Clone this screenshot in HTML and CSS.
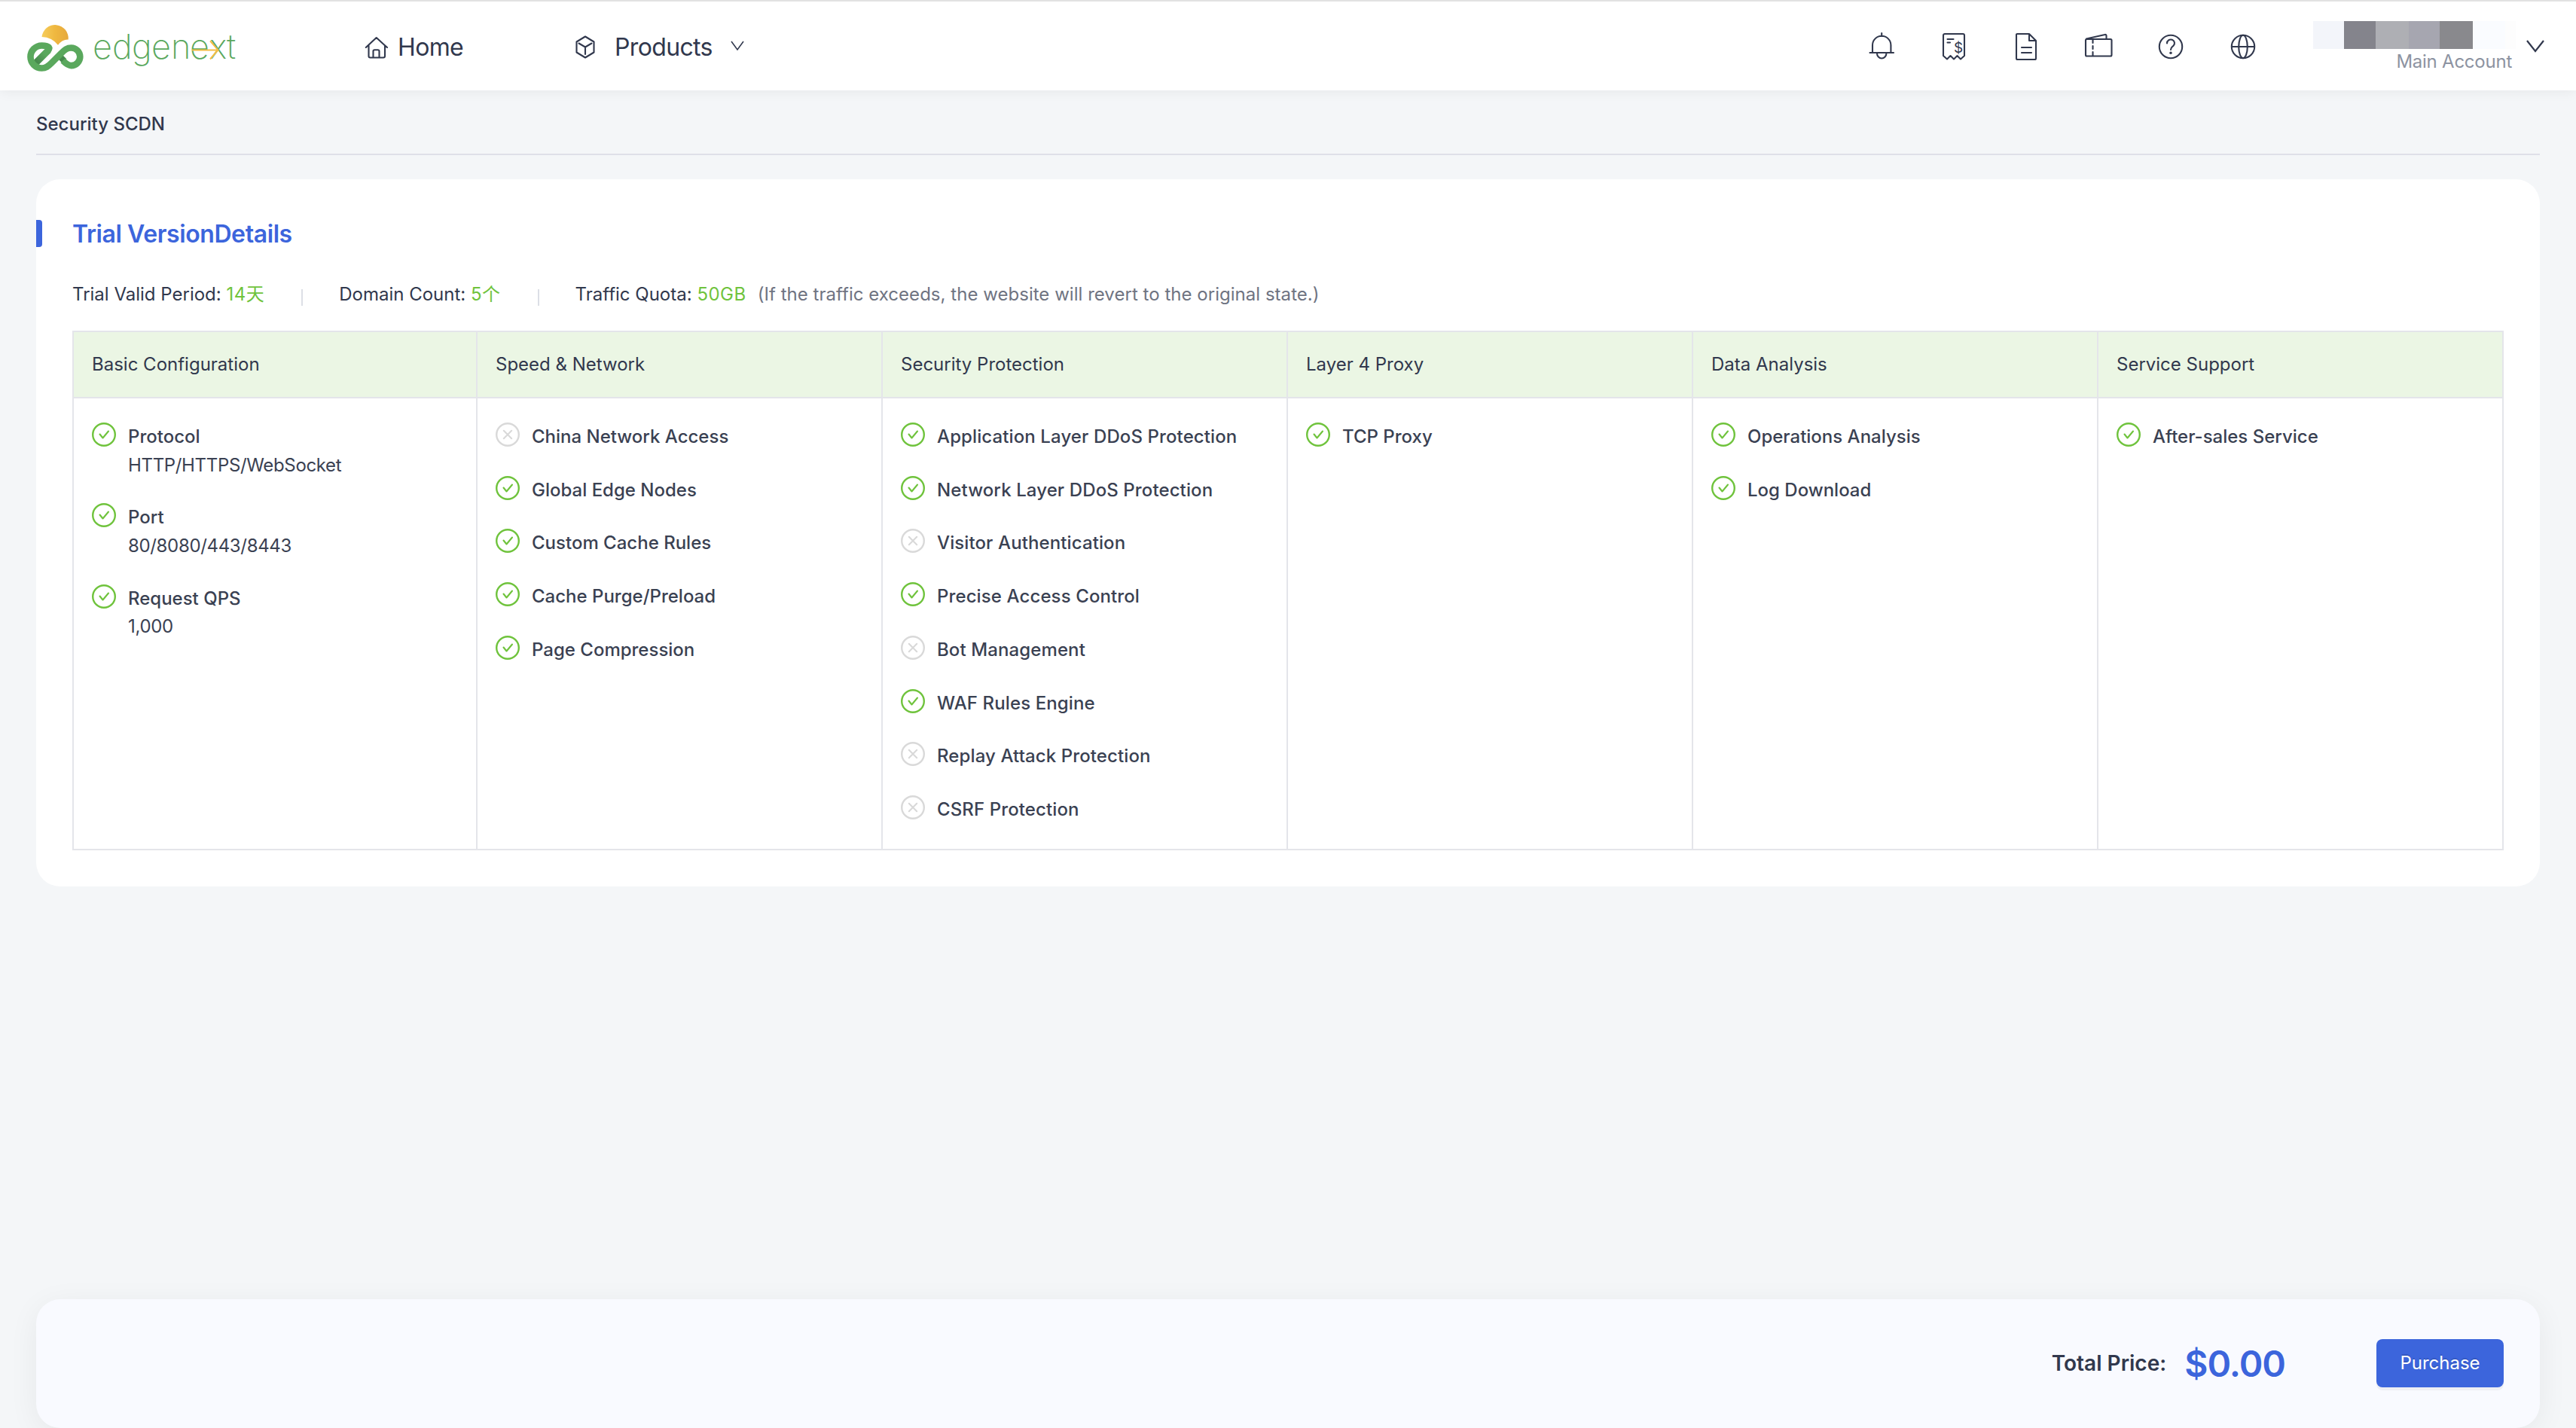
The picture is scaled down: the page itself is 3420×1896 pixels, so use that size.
FILE: index.html
```
<!DOCTYPE html>
<html lang="en">
<head>
    <meta charset="UTF-8">
    <meta name="viewport" content="width=device-width, initial-scale=1.0">
    <title>Security SCDN</title>
    <link rel="stylesheet" href="styles.css">
</head>
<body>
    <!-- icons shared by the feature lists -->
    <svg class="sprite" width="0" height="0">
        <symbol id="yes" viewBox="0 0 32 32">
            <circle cx="16" cy="16" r="14.8" fill="none" stroke="currentColor" stroke-width="2.4"/>
            <path d="M10.5 15.5l4 5 7.5-9" fill="none" stroke="currentColor" stroke-width="2.1" stroke-linecap="round" stroke-linejoin="round"/>
        </symbol>
        <symbol id="no" viewBox="0 0 32 32">
            <circle cx="16" cy="16" r="14.8" fill="none" stroke="currentColor" stroke-width="2.4"/>
            <path d="M10.8 10.8l10.4 10.4M21.2 10.8L10.8 21.2" fill="none" stroke="currentColor" stroke-width="2.1" stroke-linecap="round"/>
        </symbol>
    </svg>

    <header class="header">
        <svg class="logo" viewBox="0 0 290 70">
            <defs>
                <linearGradient id="sun" x1="0" x2="1">
                    <stop offset="0" stop-color="#f6cd5c"/>
                    <stop offset="0.5" stop-color="#efb840"/>
                    <stop offset="1" stop-color="#e6a83c"/>
                </linearGradient>
                <linearGradient id="fade" x1="0" y1="1" x2="1" y2="0">
                    <stop offset="0.1" stop-color="#478a4d"/>
                    <stop offset="0.7" stop-color="#5aa85d"/>
                </linearGradient>
            </defs>
            <path d="M25.5 19A17.6 17.6 0 0 1 60.7 22.5Q53 22 47 29.7Q39 19.5 25.5 19Z" fill="url(#sun)"/>
            <path d="M17.5 53.5L34.5 36.5" stroke="url(#fade)" stroke-width="9"/>
            <path d="M50 45.5L55.5 51" stroke="#478a4d" stroke-width="8"/>
            <path d="M33 38C37 34 36 30.5 25.5 30.5A15 15 0 0 0 25.5 60.5C31 60.5 34 58 38 54L51 41C56 36 59 33.5 64.5 33.5A11.8 11.8 0 0 1 64.5 57.1C60.5 57.1 57 54 53.5 50.5" fill="none" stroke="#5aa85d" stroke-width="8.6"/>
            <text class="logo-text" x="93 119 145 171 197 222 248 271" y="48">edgenex<tspan class="logo-t">t</tspan></text>
            <path d="M225 36.4H259M249 24.3L259.5 36.4L249 48.5" fill="none" stroke="#f4bd45" stroke-width="2"/>
        </svg>

        <nav class="nav">
            <a class="nav-item">
                <svg class="nav-icon nav-home" viewBox="0 0 32 32">
                    <path d="M1.8 16L15.7 3L30 16M5.5 13.5V27.5a2 2 0 0 0 2 2h17.500a2 2 0 0 0 2-2V13.500M11.500 29.500V21a1.800 1.800 0 0 1 1.800-1.800h4.400a1.800 1.800 0 0 1 1.800 1.800V29.500"/>
                </svg>
                <span>Home</span>
            </a>
            <a class="nav-item nav-products">
                <svg class="nav-icon nav-cube" viewBox="0 0 32 32">
                    <path d="M16 1.500L27.500 8.500V22.500L16 29.500L4.500 22.500V8.500ZM7.500 10.500L16 15.500L24.500 10.500M16 15.500V25"/>
                </svg>
                <span>Products</span>
                <svg class="nav-arrow" viewBox="0 0 20 14"><path d="M2 1L10 12L18 1"/></svg>
            </a>
        </nav>

        <div class="tools">
            <svg class="tool" viewBox="0 0 40 40">
                <path d="M8 29V19a12.200 12.200 0 0 1 24.400 0V29M4.500 29H36M14 30a6.200 6.500 0 0 0 12.400 0M20.200 3v4"/>
            </svg>
            <svg class="tool" viewBox="0 0 40 40">
                <path d="M6 33V6a2 2 0 0 1 2-2H32a2 2 0 0 1 2 2V33L29 37.500L24.500 33L20 37.500L15.500 33L11 37.500ZM11.500 11h8M11.500 15.500h3.500"/>
                <text class="tool-sign" x="20" y="29">$</text>
            </svg>
            <svg class="tool" viewBox="0 0 40 40">
                <path d="M8 4H24L33 13V36.500a1.500 1.500 0 0 1-1.500 1.500H8.500a1.500 1.500 0 0 1-1.500-1.500V5a1 1 0 0 1 1-1ZM24 4v9h9M14 22h13M14 29h13"/>
            </svg>
            <svg class="tool" viewBox="0 0 40 40">
                <rect x="3" y="11" width="34.500" height="22.500" rx="1.500"/>
                <path d="M4 10.500L28.500 5a1.500 1.500 0 0 1 2 1.500V11M12.500 11v5M12.500 20v4M12.500 28v5"/>
            </svg>
            <svg class="tool" viewBox="0 0 40 40">
                <circle cx="20" cy="21" r="15.200"/>
                <path d="M15 16.500a5 4.800 0 1 1 8.500 3.200c-2 2-3.500 2.600-3.500 5.300"/>
                <circle class="dot" cx="20" cy="29.300" r="1.700"/>
            </svg>
            <svg class="tool" viewBox="0 0 40 40">
                <circle cx="20" cy="21" r="15.200"/>
                <ellipse cx="20" cy="21" rx="5.800" ry="15.200"/>
                <path d="M5 21H35"/>
            </svg>
        </div>

        <div class="account">
            <div class="account-name">
                <i class="m1"></i><i class="m2"></i><i class="m3"></i><i class="m4"></i><i class="m5"></i><i class="m6"></i><i class="m7"></i>
            </div>
            <div class="account-type">Main Account</div>
        </div>
        <svg class="account-arrow" viewBox="0 0 24 17"><path d="M1 1L12 15L23 1"/></svg>
    </header>

    <main class="main">
        <div class="crumb">Security SCDN</div>

        <section class="card">
            <h2 class="card-title">Trial VersionDetails</h2>

            <div class="summary">
                <div>Trial Valid Period: <span class="value">14天</span></div>
                <i class="split"></i>
                <div>Domain Count: <span class="value">5个</span></div>
                <i class="split"></i>
                <div>Traffic Quota: <span class="value">50GB</span></div>
                <div class="note">(If the traffic exceeds, the website will revert to the original state.)</div>
            </div>

            <div class="plan">
                <div class="plan-col">
                    <div class="plan-head">Basic Configuration</div>
                    <ul class="plan-body">
                        <li><svg class="mark yes"><use href="#yes"/></svg><div><b>Protocol</b><p>HTTP/HTTPS/WebSocket</p></div></li>
                        <li><svg class="mark yes"><use href="#yes"/></svg><div><b>Port</b><p>80/8080/443/8443</p></div></li>
                        <li><svg class="mark yes"><use href="#yes"/></svg><div><b>Request QPS</b><p>1,000</p></div></li>
                    </ul>
                </div>
                <div class="plan-col">
                    <div class="plan-head">Speed &amp; Network</div>
                    <ul class="plan-body">
                        <li><svg class="mark no"><use href="#no"/></svg><b>China Network Access</b></li>
                        <li><svg class="mark yes"><use href="#yes"/></svg><b>Global Edge Nodes</b></li>
                        <li><svg class="mark yes"><use href="#yes"/></svg><b>Custom Cache Rules</b></li>
                        <li><svg class="mark yes"><use href="#yes"/></svg><b>Cache Purge/Preload</b></li>
                        <li><svg class="mark yes"><use href="#yes"/></svg><b>Page Compression</b></li>
                    </ul>
                </div>
                <div class="plan-col">
                    <div class="plan-head">Security Protection</div>
                    <ul class="plan-body plan-security">
                        <li><svg class="mark yes"><use href="#yes"/></svg><b>Application Layer DDoS Protection</b></li>
                        <li><svg class="mark yes"><use href="#yes"/></svg><b>Network Layer DDoS Protection</b></li>
                        <li><svg class="mark no"><use href="#no"/></svg><b>Visitor Authentication</b></li>
                        <li><svg class="mark yes"><use href="#yes"/></svg><b>Precise Access Control</b></li>
                        <li><svg class="mark no"><use href="#no"/></svg><b>Bot Management</b></li>
                        <li><svg class="mark yes"><use href="#yes"/></svg><b>WAF Rules Engine</b></li>
                        <li><svg class="mark no"><use href="#no"/></svg><b>Replay Attack Protection</b></li>
                        <li><svg class="mark no"><use href="#no"/></svg><b>CSRF Protection</b></li>
                    </ul>
                </div>
                <div class="plan-col">
                    <div class="plan-head">Layer 4 Proxy</div>
                    <ul class="plan-body">
                        <li><svg class="mark yes"><use href="#yes"/></svg><b>TCP Proxy</b></li>
                    </ul>
                </div>
                <div class="plan-col">
                    <div class="plan-head">Data Analysis</div>
                    <ul class="plan-body">
                        <li><svg class="mark yes"><use href="#yes"/></svg><b>Operations Analysis</b></li>
                        <li><svg class="mark yes"><use href="#yes"/></svg><b>Log Download</b></li>
                    </ul>
                </div>
                <div class="plan-col">
                    <div class="plan-head">Service Support</div>
                    <ul class="plan-body">
                        <li><svg class="mark yes"><use href="#yes"/></svg><b>After-sales Service</b></li>
                    </ul>
                </div>
            </div>
        </section>

        <footer class="pay">
            <span class="pay-label">Total Price:</span>
            <span class="pay-price">$0.00</span>
            <button class="pay-button">Purchase</button>
        </footer>
    </main>
</body>
</html>
```
FILE: styles.css
```
* {
    box-sizing: border-box;
}

body {
    margin: 0;
    height: 1896px;
    display: flex;
    flex-direction: column;
    overflow: hidden;
    background-color: #f4f6f8;
    color: #31384d;
    font-family: Inter, "Noto Sans CJK SC", sans-serif;
    font-size: 24px;
}

.sprite {
    position: absolute;
}

/* header */
.header {
    height: 120px;
    flex-shrink: 0;
    display: flex;
    align-items: center;
    padding: 0 42px 0 30px;
    border-top: 2px solid #e2e2e2;
    background-color: #fff;
    box-shadow: 0 2px 16px rgba(0, 0, 0, 0.06);
}

.logo {
    width: 290px;
    height: 70px;
    margin-top: 8px;
    margin-right: 164px;
}

.logo-text {
    font-family: Inter, sans-serif;
    font-size: 45px;
    font-weight: 150;
    fill: #5aa85d;
}

.logo-t {
    font-weight: 250;
}

.nav {
    display: flex;
    margin-top: 3px;
    font-size: 32px;
    letter-spacing: -0.65px;
}

.nav-item {
    display: flex;
    align-items: center;
}

.nav-products {
    margin-left: 146px;
}

.nav-icon {
    width: 32px;
    height: 32px;
    fill: none;
    stroke: #31384d;
    stroke-width: 2.1;
    stroke-linejoin: round;
    stroke-linecap: round;
}

.nav-home {
    margin-right: 12px;
}

.nav-cube {
    margin-right: 23px;
}

.nav-arrow {
    width: 20px;
    height: 14px;
    margin-left: 23px;
    margin-bottom: 3px;
    fill: none;
    stroke: #31384d;
    stroke-width: 1.6;
}

.tools {
    display: flex;
    gap: 56px;
    margin-left: auto;
}

.tool {
    width: 40px;
    height: 40px;
    fill: none;
    stroke: #31384d;
    stroke-width: 2.1;
    stroke-linejoin: round;
    stroke-linecap: round;
}

.tool .dot {
    fill: #31384d;
    stroke: none;
}

.tool-sign {
    font-size: 19px;
    fill: #31384d;
    stroke: none;
}

.account {
    width: 269px;
    align-self: flex-start;
    margin-left: 73px;
    padding-top: 26px;
}

.account-name {
    display: flex;
    height: 37px;
}

.m1 { width: 41px; background-color: #f3f5fa; }
.m2 { width: 42px; background-color: #84848c; }
.m3 { width: 44px; background-color: #aeafb4; }
.m4 { width: 41px; background-color: #a6a6b0; }
.m5 { width: 44px; background-color: #89898d; }
.m6 { width: 43px; background-color: #fafcff; }
.m7 { width: 14px; background-color: #fdfdfd; }

.account-type {
    padding-right: 5px;
    line-height: 33px;
    text-align: right;
    letter-spacing: -0.24px;
    color: #8d93a1;
}

.account-arrow {
    width: 24px;
    height: 17px;
    margin-left: 14px;
    fill: none;
    stroke: #31384d;
    stroke-width: 2.2;
}

/* page */
.main {
    flex: 1;
    display: flex;
    flex-direction: column;
    padding: 0 48px;
}

.crumb {
    height: 86px;
    padding-top: 4px;
    line-height: 82px;
    font-weight: 500;
    border-bottom: 2px solid #dfe0e8;
}

.card {
    margin-top: 32px;
    padding: 54px 48px 48px;
    border-radius: 32px;
    background-color: #fff;
}

.card-title {
    display: flex;
    gap: 40px;
    margin: 0 0 0 -48px;
    font-size: 32px;
    font-weight: 600;
    line-height: 38px;
    letter-spacing: -0.4px;
    color: #3c65dc;
}

.card-title::before {
    content: '';
    width: 8px;
    height: 36px;
    border-radius: 0 4px 4px 0;
    background-color: #3c65dc;
}

.summary {
    display: flex;
    height: 39px;
    margin-top: 41px;
    margin-bottom: 29px;
    line-height: 39px;
}

.value {
    color: #6fc33c;
    letter-spacing: 0.5px;
}

.split {
    width: 2px;
    height: 22px;
    margin: 13px 48px 0 49px;
    background-color: #dcdfe6;
}

.note {
    margin-left: 15px;
    letter-spacing: 0.03px;
    color: #6f7482;
}

.plan {
    display: grid;
    grid-template-columns: repeat(6, 1fr);
    height: 690px;
    border-top: 2px solid #e4e5ea;
    border-bottom: 2px solid #e4e5ea;
}

.plan-col {
    border-right: 2px solid #e4e5ea;
}

.plan-col:first-child {
    border-left: 2px solid #e4e5ea;
}

.plan-head {
    height: 88px;
    padding-left: 24px;
    line-height: 85px;
    border-bottom: 2px solid #e4e5ea;
    background-color: #ebf6e4;
}

.plan-body {
    display: flex;
    flex-direction: column;
    gap: 32px;
    margin: 0;
    padding: 32px 24px 0;
    list-style: none;
    color: #3a4152;
}

.plan-body li {
    display: flex;
    gap: 16px;
}

.plan-body b {
    display: block;
    font-weight: 500;
    line-height: 38.7px;
}

.plan-security b {
    letter-spacing: 0.11px;
}

.plan-body p {
    margin: 0;
    line-height: 36.6px;
    letter-spacing: -0.34px;
}

.mark {
    width: 32px;
    height: 32px;
    flex-shrink: 0;
}

.mark.yes {
    color: #6fc33c;
}

.mark.no {
    color: #d9d9d9;
}

/* order bar */
.pay {
    height: 171px;
    margin-top: auto;
    padding-right: 48px;
    display: flex;
    align-items: center;
    justify-content: flex-end;
    border-radius: 32px;
    background-color: #f9faff;
    box-shadow: 0 8px 40px rgba(0, 0, 0, 0.06);
}

.pay-label {
    font-size: 28px;
    font-weight: 600;
    margin-right: 24px;
    margin-bottom: 2px;
}

.pay-price {
    font-size: 48px;
    font-weight: 600;
    letter-spacing: -1px;
    color: #3c65dc;
    margin-right: 121px;
}

.pay-button {
    width: 169px;
    height: 64px;
    padding: 0;
    margin-bottom: 2px;
    border: none;
    border-radius: 8px;
    background-color: #3c65dc;
    color: #fff;
    font-family: inherit;
    font-size: 24px;
    text-shadow: 0 -2px 0 rgba(0, 0, 0, 0.12);
    box-shadow: 0 4px 0 rgba(0, 0, 0, 0.045);
}
```
